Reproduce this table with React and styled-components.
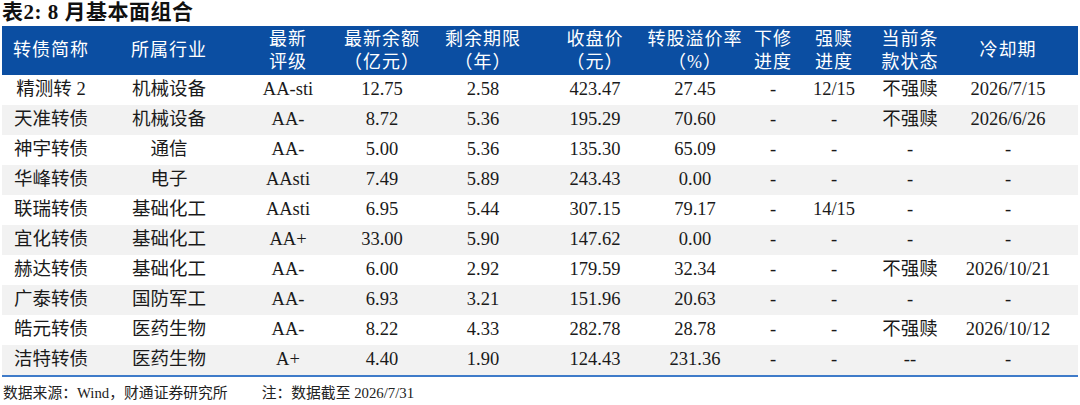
import React from 'react';
import styled, { createGlobalStyle } from 'styled-components';

const GlobalStyle = createGlobalStyle`
  html, body {
    margin: 0;
    padding: 0;
    background: #ffffff;
  }
  body {
    font-family: "Liberation Serif", "Noto Sans CJK SC", serif;
    color: #1a1a1a;
  }
`;

const COLS = '98px 138px 100px 88px 114px 110px 90px 66px 56px 96px 120px';

const Page = styled.div`
  width: 1080px;
  height: 405px;
  overflow: hidden;
`;

const Title = styled.div`
  height: 26px;
  padding-left: 2px;
  font-size: 21px;
  font-weight: bold;
  line-height: 24px;
  letter-spacing: 0.5px;
  color: #111;
  white-space: nowrap;
`;

const Table = styled.div`
  margin: 0 2px;
  border-bottom: 2px solid #3f7bc9;
`;

const HeadRow = styled.div`
  display: grid;
  grid-template-columns: ${COLS};
  height: 49px;
  background: #0b4ea2;
  color: #ffffff;
`;

const Row = styled.div`
  display: grid;
  grid-template-columns: ${COLS};
  height: 30px;
  background: ${(p) => (p.$striped ? '#f2f2f2' : '#ffffff')};
`;

const HeadCell = styled.div`
  display: flex;
  align-items: center;
  justify-content: center;
  text-align: center;
  font-size: 18px;
  line-height: 23px;
  letter-spacing: 1px;
  white-space: nowrap;
  padding-right: ${(p) => p.$padRight || 0}px;
`;

const Cell = styled.div`
  display: flex;
  align-items: center;
  justify-content: center;
  font-size: 18.5px;
  line-height: 28px;
  padding-bottom: 2px;
  white-space: nowrap;
  padding-right: ${(p) => p.$padRight || 0}px;
`;

const Footer = styled.div`
  padding: 6px 0 0 3px;
  font-size: 14.8px;
  line-height: 20px;
  color: #222;
  white-space: nowrap;
`;

const Gap = styled.span`
  display: inline-block;
  width: 34px;
`;

const headers = [
  ['转债简称'],
  ['所属行业'],
  ['最新', '评级'],
  ['最新余额', '（亿元）'],
  ['剩余期限', '（年）'],
  ['收盘价', '（元）'],
  ['转股溢价率', '（%）'],
  ['下修', '进度'],
  ['强赎', '进度'],
  ['当前条', '款状态'],
  ['冷却期'],
];

const rows = [
  ['精测转 2', '机械设备', 'AA-sti', '12.75', '2.58', '423.47', '27.45', '-', '12/15', '不强赎', '2026/7/15'],
  ['天准转债', '机械设备', 'AA-', '8.72', '5.36', '195.29', '70.60', '-', '-', '不强赎', '2026/6/26'],
  ['神宇转债', '通信', 'AA-', '5.00', '5.36', '135.30', '65.09', '-', '-', '-', '-'],
  ['华峰转债', '电子', 'AAsti', '7.49', '5.89', '243.43', '0.00', '-', '-', '-', '-'],
  ['联瑞转债', '基础化工', 'AAsti', '6.95', '5.44', '307.15', '79.17', '-', '14/15', '-', '-'],
  ['宜化转债', '基础化工', 'AA+', '33.00', '5.90', '147.62', '0.00', '-', '-', '-', '-'],
  ['赫达转债', '基础化工', 'AA-', '6.00', '2.92', '179.59', '32.34', '-', '-', '不强赎', '2026/10/21'],
  ['广泰转债', '国防军工', 'AA-', '6.93', '3.21', '151.96', '20.63', '-', '-', '-', '-'],
  ['皓元转债', '医药生物', 'AA-', '8.22', '4.33', '282.78', '28.78', '-', '-', '不强赎', '2026/10/12'],
  ['洁特转债', '医药生物', 'A+', '4.40', '1.90', '124.43', '231.36', '-', '-', '--', '-'],
];

export default function App() {
  return (
    <Page>
      <GlobalStyle />
      <Title>表2: 8 月基本面组合</Title>
      <Table>
        <HeadRow>
          {headers.map((lines, i) => (
            <HeadCell key={i} $padRight={i === 10 ? 20 : 0}>
              <div>
                {lines.map((l, j) => (
                  <div key={j}>{l}</div>
                ))}
              </div>
            </HeadCell>
          ))}
        </HeadRow>
        {rows.map((r, i) => (
          <Row key={i} $striped={i % 2 === 1}>
            {r.map((v, j) => (
              <Cell key={j} $padRight={j === 10 ? 20 : 0}>
                {v}
              </Cell>
            ))}
          </Row>
        ))}
      </Table>
      <Footer>
        数据来源：Wind，财通证券研究所<Gap />注：数据截至 2026/7/31
      </Footer>
    </Page>
  );
}
